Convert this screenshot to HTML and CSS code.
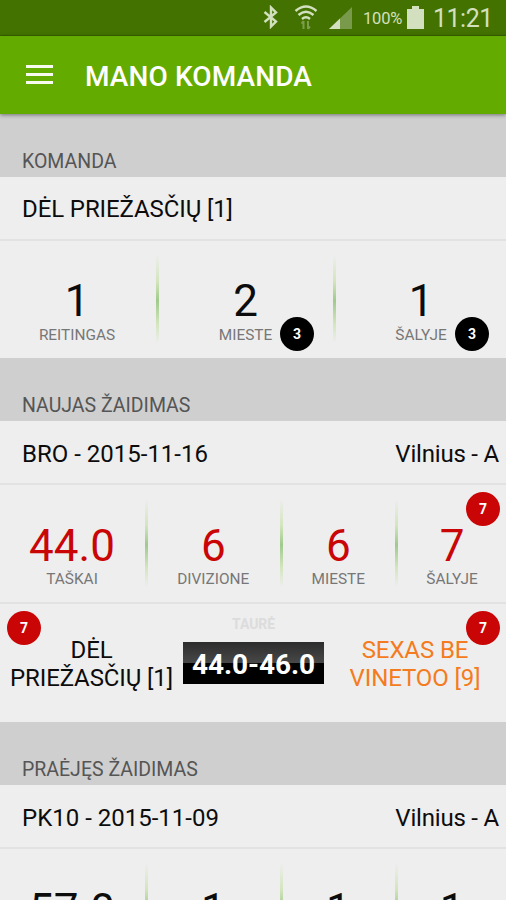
FILE: index.html
```html
<!DOCTYPE html>
<html lang="lt">
<head>
  <meta charset="UTF-8">
  <title>Mano komanda</title>
  <link rel="stylesheet" href="styles.css">
</head>
<body>
  <div class="status-bar">
    <svg class="bluetooth" width="18" height="24" viewBox="0 0 18 24"><path d="M2.500 7L14 16.500 9 21.500V2.500L14 7.500 2.500 17" /></svg>
    <svg class="wifi" width="24" height="26" viewBox="0 0 24 26">
      <path d="M1.500 7Q12-2 22.500 7M4.500 11Q12 4.500 19.500 11M8 15Q12 11.500 16 15" />
      <path class="dim" d="M9.500 25v-8M7.500 19.500l2-2.500M14 17v8M16 22.500l-2 2.500" />
    </svg>
    <svg class="signal" width="23" height="22" viewBox="0 0 23 22">
      <path class="dim" d="M0 22L23 0V22Z" />
      <path class="lit" d="M0 22L11 11.500V22Z" />
    </svg>
    <span class="percent">100%</span>
    <svg class="battery" width="17" height="23" viewBox="0 0 17 23"><path d="M5 0h7v3h5v20H0V3h5Z" /></svg>
    <span class="clock">11:21</span>
  </div>

  <div class="header">
    <div class="menu"><span></span><span></span><span></span></div>
    <div class="title">MANO KOMANDA</div>
  </div>

  <div class="section-title">KOMANDA</div>
  <div class="row"><span class="team">DĖL PRIEŽASČIŲ [1]</span></div>
  <div class="stats three">
    <div class="stat"><div class="number">1</div><div class="label">REITINGAS</div></div>
    <div class="stat"><div class="number">2</div><div class="label">MIESTE</div><div class="badge black b-mieste">3</div></div>
    <div class="stat"><div class="number">1</div><div class="label">ŠALYJE</div><div class="badge black b-salyje">3</div></div>
  </div>

  <div class="section-title">NAUJAS ŽAIDIMAS</div>
  <div class="row"><span>BRO - 2015-11-16</span><span class="city">Vilnius - A</span></div>
  <div class="stats four red">
    <div class="stat"><div class="number">44.0</div><div class="label">TAŠKAI</div></div>
    <div class="stat"><div class="number">6</div><div class="label">DIVIZIONE</div></div>
    <div class="stat"><div class="number">6</div><div class="label">MIESTE</div></div>
    <div class="stat"><div class="number">7</div><div class="label">ŠALYJE</div></div>
    <div class="badge b-right">7</div>
  </div>
  <div class="match">
    <div class="home">DĖL<br>PRIEŽASČIŲ [1]</div>
    <div class="result">
      <div class="cup">TAURĖ</div>
      <div class="score">44.0-46.0</div>
    </div>
    <div class="away">SEXAS BE<br>VINETOO [9]</div>
    <div class="badge b-left">7</div>
    <div class="badge b-right">7</div>
  </div>

  <div class="section-title">PRAĖJĘS ŽAIDIMAS</div>
  <div class="row"><span>PK10 - 2015-11-09</span><span class="city">Vilnius - A</span></div>
  <div class="stats four">
    <div class="stat"><div class="number">57.0</div></div>
    <div class="stat"><div class="number">1</div></div>
    <div class="stat"><div class="number">1</div></div>
    <div class="stat"><div class="number">1</div></div>
  </div>
</body>
</html>
```
FILE: styles.css
```css
* {
  margin: 0;
  padding: 0;
  box-sizing: border-box;
}
body {
  font-family: Roboto, 'Liberation Sans', sans-serif;
  background: #eee;
  color: #0c0c0c;
  height: 900px;
  overflow: hidden;
}
.status-bar {
  display: flex;
  align-items: center;
  height: 36px;
  padding-left: 262px;
  background: #437200;
  border-bottom: 1px solid #386300;
  color: #d3e0bf;
}
.status-bar svg {
  flex: none;
  fill: none;
  stroke: #d3e0bf;
  stroke-width: 2.4;
}
.status-bar .bluetooth {
  margin-top: -1px;
}
.status-bar .wifi {
  margin-left: 14px;
  margin-top: -2px;
}
.status-bar .wifi .dim {
  stroke: #7c9d4c;
  stroke-width: 2;
}
.status-bar .signal {
  margin-left: 11px;
  stroke: none;
}
.signal .dim {
  fill: #79994b;
}
.signal .lit {
  fill: #d3e0bf;
}
.percent {
  width: 40px;
  margin-left: 11px;
  margin-top: 2px;
  font-size: 16.500px;
  letter-spacing: -0.2px;
  white-space: nowrap;
}
.status-bar .battery {
  margin-left: 4px;
  margin-top: -1px;
  fill: #d3e0bf;
  stroke: none;
}
.clock {
  margin-left: 9px;
  margin-top: 2px;
  font-size: 25px;
  letter-spacing: -0.5px;
}
.header {
  position: relative;
  display: flex;
  align-items: center;
  height: 78px;
  padding-left: 26px;
  background: #64ab00;
  box-shadow: 0 1px 4px rgba(0, 0, 0, 0.45);
}
.menu {
  display: flex;
  flex-direction: column;
  gap: 5px;
  width: 27px;
  margin-right: 32px;
  margin-top: -1px;
}
.menu span {
  height: 3px;
  background: #f6faef;
}
.title {
  color: #fff;
  font-size: 28px;
  font-weight: 500;
  line-height: 32px;
  letter-spacing: 0.1px;
  margin-top: 4px;
}
.section-title {
  height: 63px;
  padding: 36px 22px 0;
  background: #cfcfcf;
  color: #555;
  font-size: 19.500px;
  line-height: 24px;
}
.row {
  display: flex;
  justify-content: space-between;
  height: 64px;
  padding: 0 7px 0 22px;
  border-bottom: 2px solid #e2e2e2;
  font-size: 24px;
  line-height: 66px;
}
.team {
  letter-spacing: -0.1px;
  line-height: 65px;
}
.city {
  letter-spacing: -0.2px;
}
.stats {
  position: relative;
  display: grid;
  height: 117px;
}
.three {
  grid-template-columns: 157px 177px 172px;
}
.four {
  grid-template-columns: 146px 134.500px 115.500px 110px;
}
.red {
  height: 119px;
  border-bottom: 2px solid #e2e2e2;
}
.red .number {
  color: #c90505;
}
.stat {
  position: relative;
  padding-top: 34px;
  text-align: center;
}
.four .stat {
  padding-top: 35px;
}
.three .stat:first-child {
  padding-right: 3px;
}
.four .stat:first-child {
  padding-right: 2px;
}
.three .stat:last-child, .four .stat:nth-child(4) {
  padding-left: 2px;
}
/* green divider fading at both ends */
.stat + .stat::before {
  content: "";
  position: absolute;
  left: -1px;
  top: 14px;
  width: 3px;
  height: 88px;
  background: linear-gradient(#eee, #d3e5be 30%, #a0ca8c 52%, #d3e5be 78%, #eee);
}
.number {
  font-size: 44px;
  line-height: 52px;
}
.label {
  color: #777;
  font-size: 15.400px;
  line-height: 18px;
  margin-top: -1px;
}
.four .label {
  margin-top: -2px;
}
.badge {
  position: absolute;
  width: 34px;
  height: 34px;
  border-radius: 50%;
  background: #c90505;
  color: #fff;
  font-size: 14px;
  font-weight: bold;
  line-height: 35px;
  text-align: center;
}
.black {
  background: #000;
}
.b-mieste {
  left: 123px;
  top: 76px;
}
.b-salyje {
  left: 121px;
  top: 76px;
}
.b-right {
  right: 6px;
  top: 7px;
}
.b-left {
  left: 7px;
  top: 7px;
}
.match {
  position: relative;
  display: grid;
  grid-template-columns: 183px 141px 182px;
  height: 118px;
  text-align: center;
  font-size: 24px;
  line-height: 28px;
  letter-spacing: -0.1px;
}
.home, .away {
  padding-top: 32px;
}
.away {
  color: #f47b20;
}
.cup {
  padding-top: 11px;
  color: #dcdcdc;
  font-size: 14px;
  font-weight: bold;
  line-height: 18px;
}
.score {
  height: 42px;
  margin-top: 9px;
  background: linear-gradient(#2c2c2c, #484848 50%, #000 50%, #000);
  color: #fff;
  font-size: 28px;
  font-weight: bold;
  line-height: 46px;
}
```
